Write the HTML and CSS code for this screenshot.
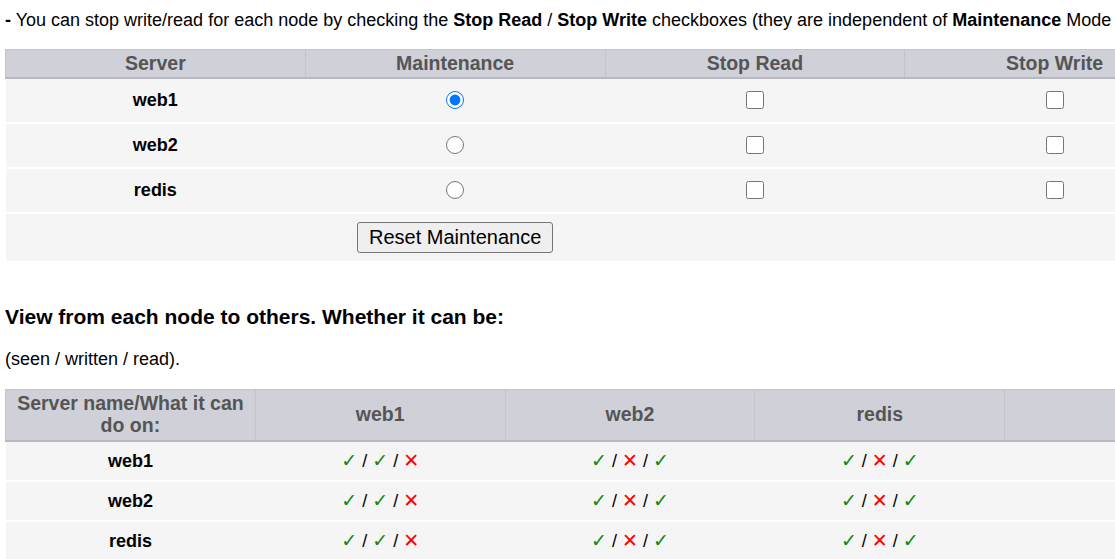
FILE: index.html
```html
<!DOCTYPE html>
<html>
<head>
<meta charset="utf-8">
<link rel="stylesheet" href="styles.css">
</head>
<body>
<div class="page">
  <p class="intro"><b>-</b> You can stop write/read for each node by checking the <b>Stop Read</b> / <b>Stop Write</b> checkboxes (they are independent of <b>Maintenance</b> Mode</p>

  <table class="grid grid-maint">
    <thead>
      <tr><th>Server</th><th>Maintenance</th><th>Stop Read</th><th>Stop Write</th></tr>
    </thead>
    <tbody>
      <tr>
        <td class="name">web1</td>
        <td><input type="radio" name="maint" checked></td>
        <td><input type="checkbox"></td>
        <td><input type="checkbox"></td>
      </tr>
      <tr>
        <td class="name">web2</td>
        <td><input type="radio" name="maint"></td>
        <td><input type="checkbox"></td>
        <td><input type="checkbox"></td>
      </tr>
      <tr>
        <td class="name">redis</td>
        <td><input type="radio" name="maint"></td>
        <td><input type="checkbox"></td>
        <td><input type="checkbox"></td>
      </tr>
      <tr class="action-row">
        <td></td>
        <td><button class="reset-btn" type="button">Reset Maintenance</button></td>
        <td></td>
        <td></td>
      </tr>
    </tbody>
  </table>

  <h3 class="heading">View from each node to others. Whether it can be:</h3>
  <p class="sub">(seen / written / read).</p>

  <table class="grid grid-view">
    <thead>
      <tr><th>Server name/What it can do on:</th><th>web1</th><th>web2</th><th>redis</th><th></th></tr>
    </thead>
    <tbody>
      <tr>
        <td class="name">web1</td>
        <td><span class="ok">✓</span> / <span class="ok">✓</span> / <span class="no">✕</span></td>
        <td><span class="ok">✓</span> / <span class="no">✕</span> / <span class="ok">✓</span></td>
        <td><span class="ok">✓</span> / <span class="no">✕</span> / <span class="ok">✓</span></td>
        <td></td>
      </tr>
      <tr>
        <td class="name">web2</td>
        <td><span class="ok">✓</span> / <span class="ok">✓</span> / <span class="no">✕</span></td>
        <td><span class="ok">✓</span> / <span class="no">✕</span> / <span class="ok">✓</span></td>
        <td><span class="ok">✓</span> / <span class="no">✕</span> / <span class="ok">✓</span></td>
        <td></td>
      </tr>
      <tr>
        <td class="name">redis</td>
        <td><span class="ok">✓</span> / <span class="ok">✓</span> / <span class="no">✕</span></td>
        <td><span class="ok">✓</span> / <span class="no">✕</span> / <span class="ok">✓</span></td>
        <td><span class="ok">✓</span> / <span class="no">✕</span> / <span class="ok">✓</span></td>
        <td></td>
      </tr>
    </tbody>
  </table>
</div>
</body>
</html>
```

FILE: styles.css
```css
html, body {
  margin: 0;
  padding: 0;
  overflow: hidden;
  background: #ffffff;
}

body {
  font-family: "Liberation Sans", Arial, sans-serif;
  font-size: 18px;
  color: #000;
}

.page {
  padding: 10px 0 0 5px;
  width: 1260px;
}

.intro {
  margin: 0 0 18px;
  white-space: nowrap;
  line-height: 21px;
}

.grid {
  border-collapse: collapse;
  table-layout: fixed;
}

.grid-maint {
  width: 1200px;
}

.grid-view {
  width: 1250px;
}

.grid th {
  background: #cfd0d8;
  color: #555555;
  font-weight: bold;
  font-size: 19.5px;
  line-height: 22px;
  padding: 2px 8px 3px;
  border: 1px solid #c2c3cb;
  border-bottom: 2px solid #b7b8c0;
  text-align: center;
}

.grid-view th {
  padding-bottom: 4px;
}

.grid td {
  background: #f5f5f5;
  border-bottom: 2px solid #ffffff;
  text-align: center;
  line-height: 21px;
}

.grid-maint td {
  padding: 0;
  height: 43px;
}

.grid-maint .action-row td {
  height: 47px;
  border-bottom: 0;
}

.grid-view td {
  padding: 0;
  height: 38px;
}

.name {
  font-weight: bold;
}

.grid input[type="radio"],
.grid input[type="checkbox"] {
  width: 18px;
  height: 18px;
  margin: -3px 0 0;
  vertical-align: middle;
}

.reset-btn {
  font-family: "Liberation Sans", Arial, sans-serif;
  font-size: 20px;
  line-height: 23px;
  padding: 3px 11px;
  color: #000;
  background: #efefef;
  border: 1px solid #767676;
  border-radius: 3px;
  vertical-align: middle;
}

.heading {
  font-size: 21px;
  line-height: 24px;
  margin: 44px 0 20px;
}

.sub {
  margin: 0 0 19px;
  line-height: 21px;
}

.ok {
  color: #0f870f;
  font-family: "DejaVu Sans", sans-serif;
  font-size: 19px;
}

.no {
  color: #ff0000;
  font-family: "DejaVu Sans", sans-serif;
  font-size: 19px;
}
```
